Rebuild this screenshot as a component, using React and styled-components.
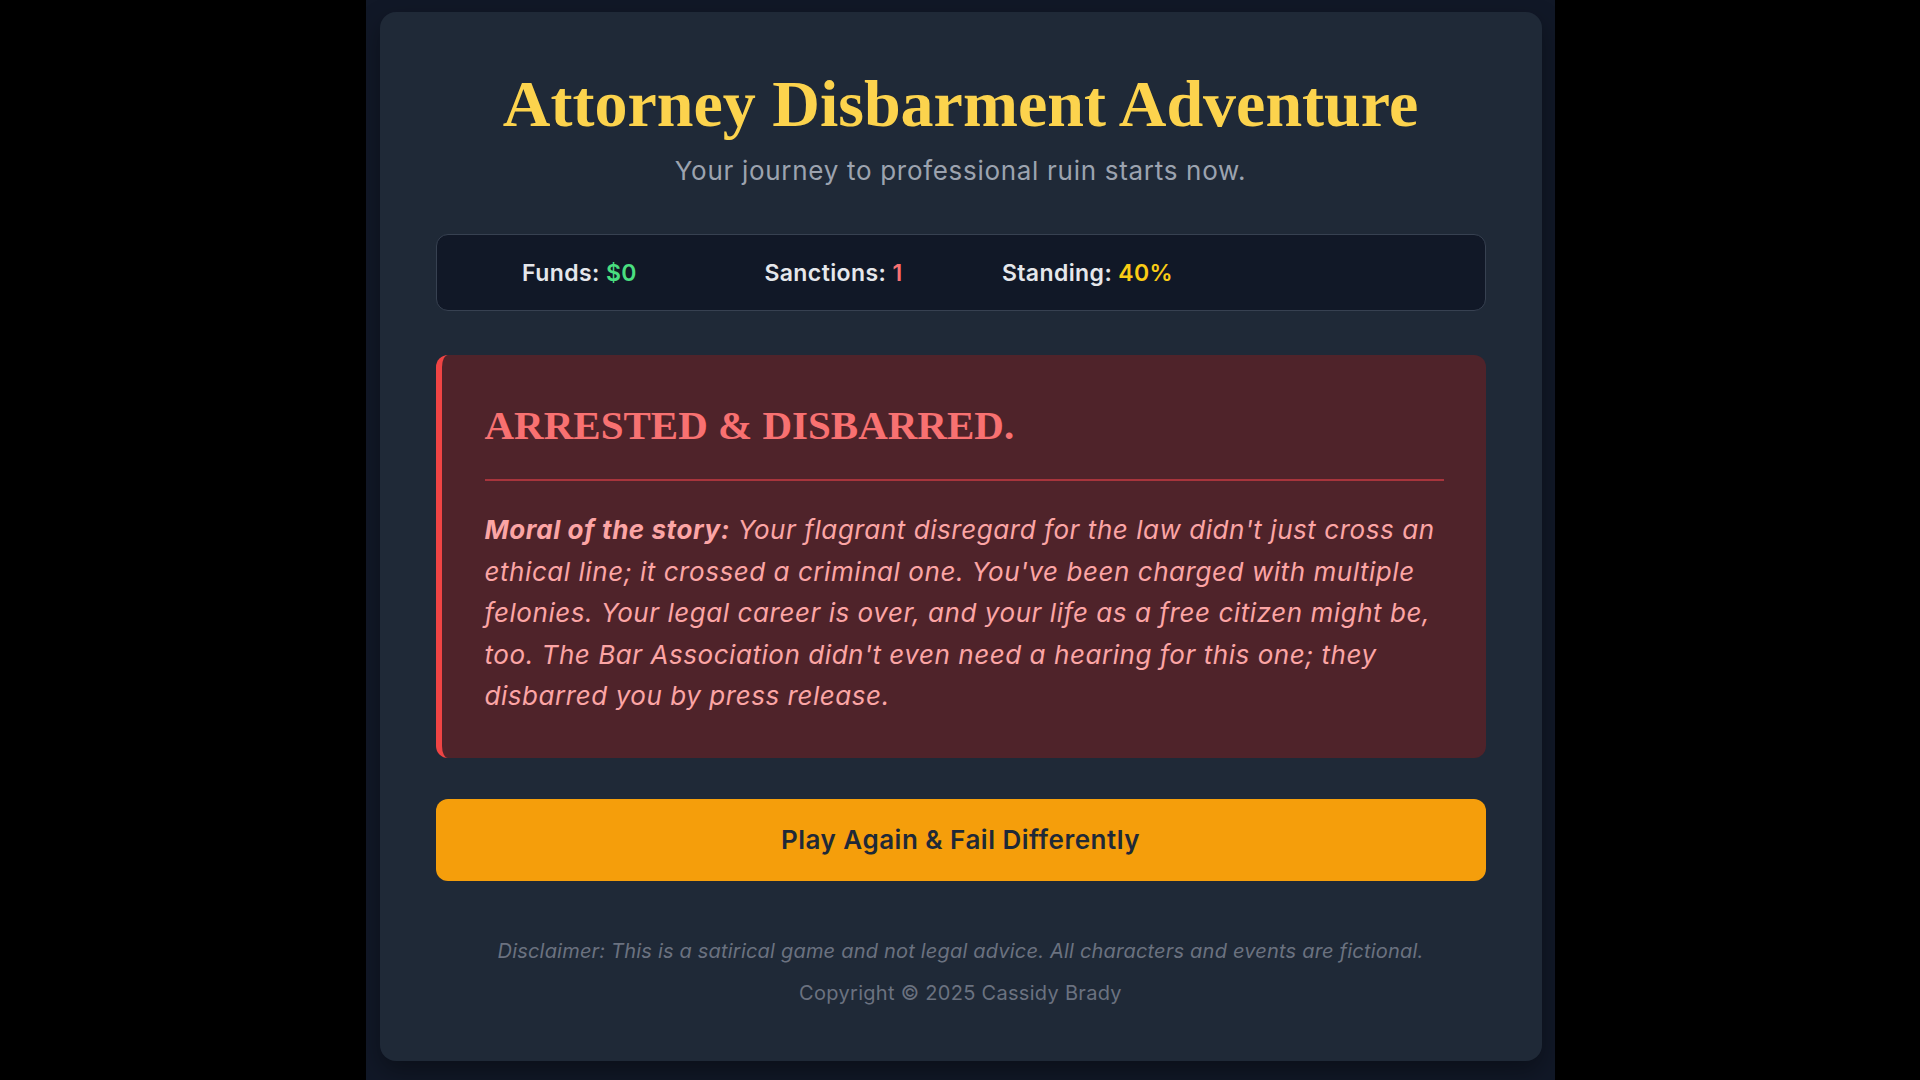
import styled, { createGlobalStyle } from "styled-components";

const GlobalStyle = createGlobalStyle`
  html, body {
    margin: 0;
    padding: 0;
    background: #000;
  }
  body {
    font-family: Inter, "Noto Sans", sans-serif;
    color: #e5e7eb;
  }
`;

const stats = [
  { label: "Funds", value: "$0", tone: "#4ade80" },
  { label: "Sanctions", value: "1", tone: "#f87171" },
  { label: "Standing", value: "40%", tone: "#facc15" },
];

const App = () => {
  return (
    <>
      <GlobalStyle />
      <Page>
        <Card>
          <Header>
            <Title>Attorney Disbarment Adventure</Title>
            <Subtitle>Your journey to professional ruin starts now.</Subtitle>
          </Header>

          <StatsBar>
            {stats.map((s) => (
              <Stat key={s.label}>
                {s.label}: <StatValue $tone={s.tone}>{s.value}</StatValue>
              </Stat>
            ))}
            <Stat />
          </StatsBar>

          <Ending>
            <EndingTitle>ARRESTED &amp; DISBARRED.</EndingTitle>
            <Moral>
              <strong>Moral of the story:</strong> Your flagrant disregard for
              the law didn't just cross an ethical line; it crossed a criminal
              one. You've been charged with multiple felonies. Your legal career
              is over, and your life as a free citizen might be, too. The Bar
              Association didn't even need a hearing for this one; they
              disbarred you by press release.
            </Moral>
          </Ending>

          <Button>Play Again &amp; Fail Differently</Button>

          <Footer>
            <Disclaimer>
              Disclaimer: This is a satirical game and not legal advice. All
              characters and events are fictional.
            </Disclaimer>
            <Copyright>Copyright © 2025 Cassidy Brady</Copyright>
          </Footer>
        </Card>
      </Page>
    </>
  );
};

export default App;

const Page = styled.div`
  width: 1189px;
  min-height: 1080px;
  margin: 0 auto;
  box-sizing: border-box;
  padding: 12px 13px 20px 14px;
  background: #111827;
`;

const Card = styled.main`
  background: #1f2937;
  border-radius: 16px;
  padding: 56px 56px 54px;
  box-shadow: 0 10px 25px rgba(0, 0, 0, 0.35);
  display: flex;
  flex-direction: column;
`;

const Header = styled.header`
  text-align: center;
`;

const Title = styled.h1`
  margin: 0;
  font-family: "Liberation Serif", "Times New Roman", serif;
  font-weight: 700;
  font-size: 66px;
  line-height: 72px;
  color: #fcd34d;
`;

const Subtitle = styled.p`
  margin: 15px 0 0;
  font-size: 26px;
  line-height: 32px;
  letter-spacing: 0.7px;
  color: #9ca3af;
`;

const StatsBar = styled.section`
  margin-top: 47px;
  height: 77px;
  box-sizing: border-box;
  padding: 0 16px;
  display: grid;
  grid-template-columns: repeat(4, 1fr);
  align-items: center;
  background: #111827;
  border: 1px solid #374151;
  border-radius: 12px;
`;

const Stat = styled.div`
  text-align: center;
  font-size: 23px;
  font-weight: 600;
  letter-spacing: 0.4px;
  color: #e5e7eb;
`;

const StatValue = styled.span`
  color: ${(p) => p.$tone};
`;

const Ending = styled.section`
  margin-top: 44px;
  padding: 41px 42px 41px 43px;
  background: #4f232a;
  border-left: 6px solid #ef4444;
  border-radius: 12px;
`;

const EndingTitle = styled.h2`
  margin: 0;
  padding-bottom: 25px;
  border-bottom: 2px solid #a8343c;
  font-family: "Liberation Serif", "Times New Roman", serif;
  font-weight: 700;
  font-size: 41px;
  line-height: 58px;
  color: #f87171;
`;

const Moral = styled.p`
  margin: 28px 0 0;
  font-style: italic;
  font-size: 26px;
  line-height: 41.6px;
  letter-spacing: 0.55px;
  color: #fca5a5;

  strong {
    font-weight: 700;
  }
`;

const Button = styled.button`
  margin-top: 41px;
  height: 82px;
  width: 100%;
  border: none;
  border-radius: 12px;
  background: #f59e0b;
  color: #1f2937;
  font-family: Inter, "Noto Sans", sans-serif;
  font-size: 26px;
  font-weight: 600;
  letter-spacing: 0.5px;
  cursor: pointer;
`;

const Footer = styled.footer`
  margin-top: 56px;
  text-align: center;
  color: #6b7280;
`;

const Disclaimer = styled.p`
  margin: 0;
  font-style: italic;
  font-size: 20px;
  line-height: 28px;
  letter-spacing: 0.2px;
`;

const Copyright = styled.p`
  margin: 14px 0 0;
  font-size: 20px;
  line-height: 28px;
  letter-spacing: 0.3px;
`;
